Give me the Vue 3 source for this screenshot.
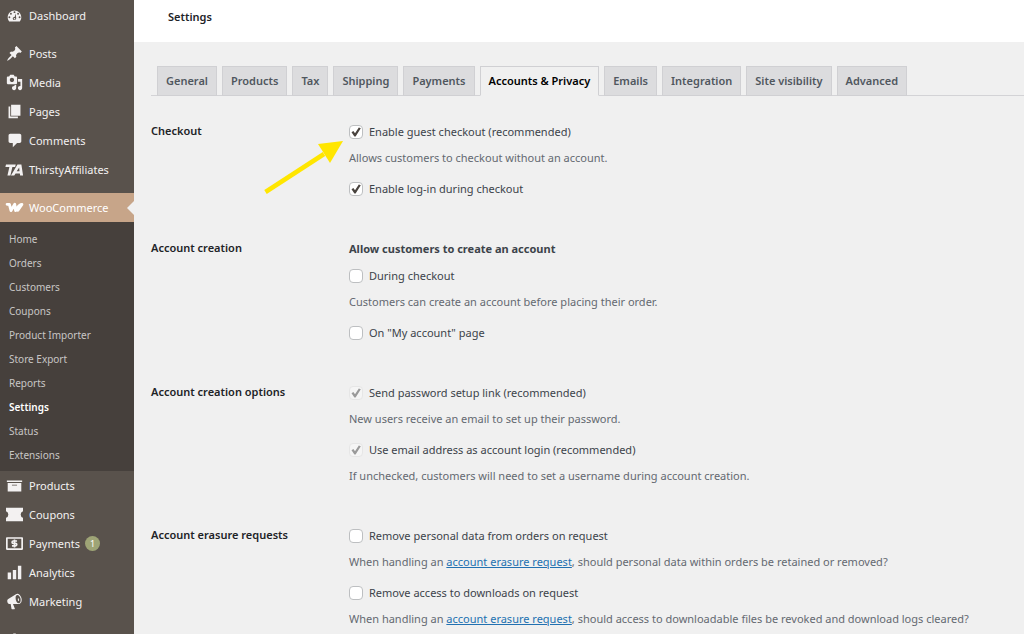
<script setup>
import { ref } from 'vue'

const topMenu = [
  { label: 'Dashboard', icon: 'dashboard', gap: true },
  { label: 'Posts', icon: 'pin' },
  { label: 'Media', icon: 'media' },
  { label: 'Pages', icon: 'pages' },
  { label: 'Comments', icon: 'comment' },
  { label: 'ThirstyAffiliates', icon: 'ta', gap: true },
  { label: 'WooCommerce', icon: 'woo', current: true },
]
const submenu = ['Home', 'Orders', 'Customers', 'Coupons', 'Product Importer', 'Store Export', 'Reports', 'Settings', 'Status', 'Extensions']
const bottomMenu = [
  { label: 'Products', icon: 'products' },
  { label: 'Coupons', icon: 'coupon' },
  { label: 'Payments', icon: 'payments', badge: 1 },
  { label: 'Analytics', icon: 'analytics' },
  { label: 'Marketing', icon: 'marketing', gap: true },
  { label: '', icon: 'brush' },
]

const icons = {
  dashboard: '<path fill-rule="evenodd" d="M3.8 17h12.4c1.1-1.400 1.800-3.100 1.800-5 0-4.400-3.600-8-8-8s-8 3.600-8 8c0 1.900.7 3.600 1.800 5zM10 5a1.100 1.100 0 1 1 0 2.200A1.100 1.100 0 0 1 10 5zM5.800 6.800a1.100 1.100 0 1 1 0 2.200 1.100 1.100 0 0 1 0-2.200zm8.400 0a1.100 1.100 0 1 1 0 2.200 1.100 1.100 0 0 1 0-2.200zM4 11a1.100 1.100 0 1 1 0 2.200A1.100 1.100 0 0 1 4 11zm12 0a1.100 1.100 0 1 1 0 2.200 1.100 1.100 0 0 1 0-2.200zM11.300 7.700 12 12.800c.3 2.700-3.700 3.500-4 1-.2-1.500 1.200-2.600 2.200-2zM10 13a.9.9 0 1 0 0 1.800.9.9 0 0 0 0-1.800z"/>',
  pin: '<path d="M10.440 3.020l1.820-1.820 6.360 6.350-1.830 1.820c-1.050-.68-2.480-.57-3.410.36l-.75.750c-.92.930-1.040 2.350-.35 3.410l-1.830 1.820-2.410-2.410-2.800 2.790c-.42.420-3.380 2.710-3.800 2.290s1.860-3.390 2.280-3.810l2.790-2.790L4.100 9.360l1.830-1.820c1.050.69 2.480.57 3.400-.36l.75-.75c.93-.92 1.050-2.350.36-3.410z"/>',
  media: '<path fill-rule="evenodd" d="M13 11V4c0-.550-.45-1-1-1h-1.670L9 1H5L3.670 3H2c-.55 0-1 .45-1 1v7c0 .55.450 1 1 1h10c.55 0 1-.45 1-1zM7 4.500c1.380 0 2.500 1.120 2.500 2.500S8.380 9.500 7 9.500 4.500 8.380 4.500 7 5.620 4.500 7 4.500zM14 6h5v10.500c0 1.380-1.120 2.500-2.500 2.500S14 17.880 14 16.500s1.120-2.500 2.500-2.500c.17 0 .340.020.5.050V9h-3V6zm-4 8.050V13h2v3.500C12 17.880 10.880 19 9.500 19S7 17.880 7 16.500 8.120 14 9.500 14c.17 0 .34.020.5.050z"/>',
  pages: '<path d="M6 15V2h11v13H6zm-1 1h9v2H3V4h2v12z"/>',
  comment: '<path d="M5 2h11c1.100 0 2 .9 2 2v7c0 1.100-.9 2-2 2h-3l-5 5v-5H5c-1.100 0-2-.9-2-2V4c0-1.100.9-2 2-2z"/>',
  ta: '<path d="M0 4h11.500l-.8 3H7.500l-2.300 10H1.700L4 7H-.7zM13.500 4h4.600l2 13h-3.500l-.3-2.400h-5L9.700 17H5.800zm2 3.700L12.600 12h3.300z"/>',
  woo: '<path d="M1.300 6.300H4L5.900 13.600 10.300 6.300 11.300 13.600C13.300 11 14.800 6.300 18.700 6.300L14 13.300" fill="none" stroke="currentColor" stroke-width="3.400" stroke-linejoin="round" stroke-linecap="round"/>',
  products: '<path fill-rule="evenodd" d="M19 4v2H1V4h18zM2 7h16v10H2V7zm11 3V9H7v1h6z"/>',
  coupon: '<path d="M0 2h20v4.200a4 4 0 0 0 0 7.600V18H0v-4.200a4 4 0 0 0 0-7.600z"/>',
  payments: '<path fill-rule="evenodd" d="M1 2.500h18c.6 0 1 .4 1 1v13c0 .6-.4 1-1 1H1c-.6 0-1-.4-1-1v-13c0-.6.4-1 1-1zm1 2v11h16v-11z"/><path d="M13 7H8.600c-2 0-2 2.800 0 2.800h2.600c2 0 2 3 0 3H7M10 5.300v9.400" fill="none" stroke="currentColor" stroke-width="1.900"/>',
  analytics: '<path d="M18 18V2h-4v16h4zm-6 0V7H8v11h4zm-10 0h4v-8H2v8z"/>',
  marketing: '<path fill-rule="evenodd" d="M18.150 5.940c.46 1.620.38 3.220-.020 4.480-.42 1.280-1.260 2.180-2.300 2.480-.16.060-.26.060-.4.060-.06.020-.12.020-.18.020-.06.020-.14.020-.22.020h-6.800l2.220 5.500c.02.140-.06.260-.14.340-.08.100-.24.160-.34.160H6.950c-.1 0-.26-.06-.34-.16-.08-.08-.16-.2-.14-.34l-1-5.500H4.250l-.02-.02c-.5.060-1.080-.18-1.540-.62s-.88-1.080-1.060-1.880c-.24-.8-.2-1.560-.02-2.200.18-.62.580-1.080 1.060-1.300l.02-.02 9-5.400c.1-.06.18-.1.240-.16.06-.04.140-.08.240-.12.160-.08.280-.12.500-.18 1.040-.3 2.240.1 3.220.98s1.840 2.240 2.260 3.860zm-2.580 5.980c.48-.14.960-.48 1.240-1.100.48-1.100.6-2.700.2-4.500-.5-1.700-1.600-3.100-2.500-3.600-1.500-.7-3 .3-3.200 2.300-.2 3.400 1.400 7.600 4.260 6.900zM14.200 5.800c.6.500 1.100 1.400 1.200 2.300.1.700-.1 1.200-.4 1.600-.8-.3-1.500-2.600-.8-3.900z"/>',
  brush: '<path d="M10 3c2 0 3 1 3 3v6H7V6c0-2 1-3 3-3z"/>',
}

const tabs = ['General', 'Products', 'Tax', 'Shipping', 'Payments', 'Accounts & Privacy', 'Emails', 'Integration', 'Site visibility', 'Advanced']

const sections = ref([
  { title: 'Checkout', fields: [
    { id: 'guest', label: 'Enable guest checkout (recommended)', checked: true, help: ['Allows customers to checkout without an account.'], arrow: true },
    { id: 'login', label: 'Enable log-in during checkout', checked: true },
  ] },
  { title: 'Account creation', heading: 'Allow customers to create an account', fields: [
    { id: 'during', label: 'During checkout', checked: false, help: ['Customers can create an account before placing their order.'] },
    { id: 'myaccount', label: 'On "My account" page', checked: false },
  ] },
  { title: 'Account creation options', fields: [
    { id: 'setup', label: 'Send password setup link (recommended)', checked: true, disabled: true, help: ['New users receive an email to set up their password.'] },
    { id: 'email', label: 'Use email address as account login (recommended)', checked: true, disabled: true, help: ['If unchecked, customers will need to set a username during account creation.'] },
  ] },
  { title: 'Account erasure requests', fields: [
    { id: 'orders', label: 'Remove personal data from orders on request', checked: false, help: ['When handling an ', 'account erasure request', ', should personal data within orders be retained or removed?'] },
    { id: 'downloads', label: 'Remove access to downloads on request', checked: false, help: ['When handling an ', 'account erasure request', ', should access to downloadable files be revoked and download logs cleared?'] },
  ] },
])
</script>

<template>
  <div class="admin">
    <nav class="sidebar" aria-label="Main menu">
      <a v-for="m in topMenu" :key="m.label" href="#" class="item" :class="{ gap: m.gap, current: m.current }">
        <svg viewBox="0 0 20 20" class="icon" aria-hidden="true" v-html="icons[m.icon]"></svg>
        <span>{{ m.label }}</span>
      </a>
      <div class="submenu">
        <a v-for="s in submenu" :key="s" href="#" :class="{ active: s === 'Settings' }">{{ s }}</a>
      </div>
      <a v-for="m in bottomMenu" :key="m.icon" href="#" class="item" :class="{ gap: m.gap }">
        <svg viewBox="0 0 20 20" class="icon" aria-hidden="true" v-html="icons[m.icon]"></svg>
        <span v-if="m.label">{{ m.label }}</span>
        <span v-if="m.badge" class="badge">{{ m.badge }}</span>
      </a>
    </nav>
    <div class="main">
      <header class="header"><h1>Settings</h1></header>
      <nav class="tabs" aria-label="Settings sections">
        <a v-for="t in tabs" :key="t" href="#" class="tab" :class="{ selected: t === 'Accounts & Privacy' }">{{ t }}</a>
      </nav>
      <form class="form">
        <section v-for="s in sections" :key="s.title" class="row">
          <h2>{{ s.title }}</h2>
          <div class="fields">
            <h3 v-if="s.heading">{{ s.heading }}</h3>
            <div v-for="f in s.fields" :key="f.id" class="field">
              <label class="check" :for="f.id">
                <input :id="f.id" v-model="f.checked" type="checkbox" :disabled="f.disabled">
                <span>{{ f.label }}</span>
              </label>
              <p v-if="f.help"><template v-for="(h, i) in f.help" :key="i"><a v-if="i === 1" href="#">{{ h }}</a><template v-else>{{ h }}</template></template></p>
              <svg v-if="f.arrow" class="arrow" viewBox="0 0 80 56" aria-hidden="true">
                <path d="M1.500 52 60 14" stroke="#ffe600" stroke-width="4.500" fill="none" />
                <path d="M79 1 54 4 66 23z" fill="#ffe600" />
              </svg>
            </div>
          </div>
        </section>
      </form>
    </div>
  </div>
</template>

<style>
body { background: #f0f0f0; }
</style>

<style scoped>
.admin {
  display: flex;
  height: 100vh;
  overflow: hidden;
  font-family: "Noto Sans", "Open Sans", sans-serif;
  font-size: 11px;
  line-height: 18px;
  color: #3c434a;
}
.sidebar {
  flex: 0 0 134px;
  padding-top: 1px;
  background: #59524c;
}
.item {
  position: relative;
  display: flex;
  align-items: center;
  height: 29px;
  padding-left: 6px;
  color: #f3f1f1;
  text-decoration: none;
}
.item.gap { margin-bottom: 9px; }
.icon {
  width: 17px;
  height: 17px;
  margin-right: 6px;
  fill: currentColor;
  overflow: visible;
}
.current { background: #c7a589; color: #fff; }
.current::after {
  content: "";
  position: absolute;
  right: 0;
  top: 8px;
  border: 7px solid transparent;
  border-left-width: 0;
  border-right-color: #f0f0f0;
}
.badge {
  min-width: 15px;
  height: 15px;
  margin-left: 5px;
  border-radius: 8px;
  background: #9ea476;
  color: #fff;
  font-size: 9px;
  line-height: 15px;
  text-align: center;
}
.submenu {
  display: flex;
  flex-direction: column;
  padding: 5px 0 4px;
  background: #46403c;
}
.submenu a {
  padding-left: 9px;
  font-size: 10px;
  line-height: 24px;
  color: #c8c6c5;
  text-decoration: none;
}
.submenu .active { color: #fff; font-weight: 600; }
.main { flex: 1; min-width: 0; }
.header {
  height: 42px;
  background: #fff;
  padding: 8px 34px 0;
  box-sizing: border-box;
}
h1, h2, h3, p { margin: 0; font-size: 11px; }
h1 { font-weight: 600; color: #1d2327; }
.tabs {
  display: flex;
  gap: 5px;
  margin: 24px 0 0 17px;
  padding-left: 6px;
  border-bottom: 1px solid #d3d3d6;
}
.tab {
  margin-bottom: -1px;
  padding: 5px 8px;
  border: 1px solid #d0d0d3;
  background: #dcdcde;
  color: #50575e;
  font-weight: 600;
  line-height: 18px;
  text-decoration: none;
  white-space: nowrap;
}
.tab.selected { background: #f0f0f0; border-bottom-color: #f0f0f0; color: #000; }
.form { padding: 26px 0 0 17px; }
.row { display: flex; margin-bottom: 41px; }
h2 { flex: 0 0 198px; font-weight: 600; color: #1d2327; }
.fields { flex: 1; min-width: 0; padding-top: 1px; }
h3 { font-weight: 700; margin-bottom: 9px; }
.field { position: relative; margin-bottom: 13px; }
.field:last-child { margin-bottom: 0; }
.check { display: flex; align-items: center; width: max-content; }
.check input {
  appearance: none;
  width: 14px;
  height: 14px;
  margin: 0 6px 0 0;
  border: 1px solid #bdbfc1;
  border-radius: 4px;
  background: #fff;
  display: grid;
  place-items: center;
}
.check input:checked::before {
  content: "";
  width: 10px;
  height: 10px;
  background: #4a443f;
  clip-path: polygon(5% 52%, 24% 40%, 40% 62%, 78% 4%, 98% 12%, 46% 96%, 34% 96%);
}
.check input:disabled { border-color: #e6e6e6; background: #f5f5f5; }
.check input:disabled::before { background: #9a9a9a; }
p { margin-top: 8px; color: #646970; white-space: nowrap; }
p a { color: #2271b1; }
.arrow { position: absolute; left: -85px; top: 17px; width: 80px; height: 56px; }
</style>
